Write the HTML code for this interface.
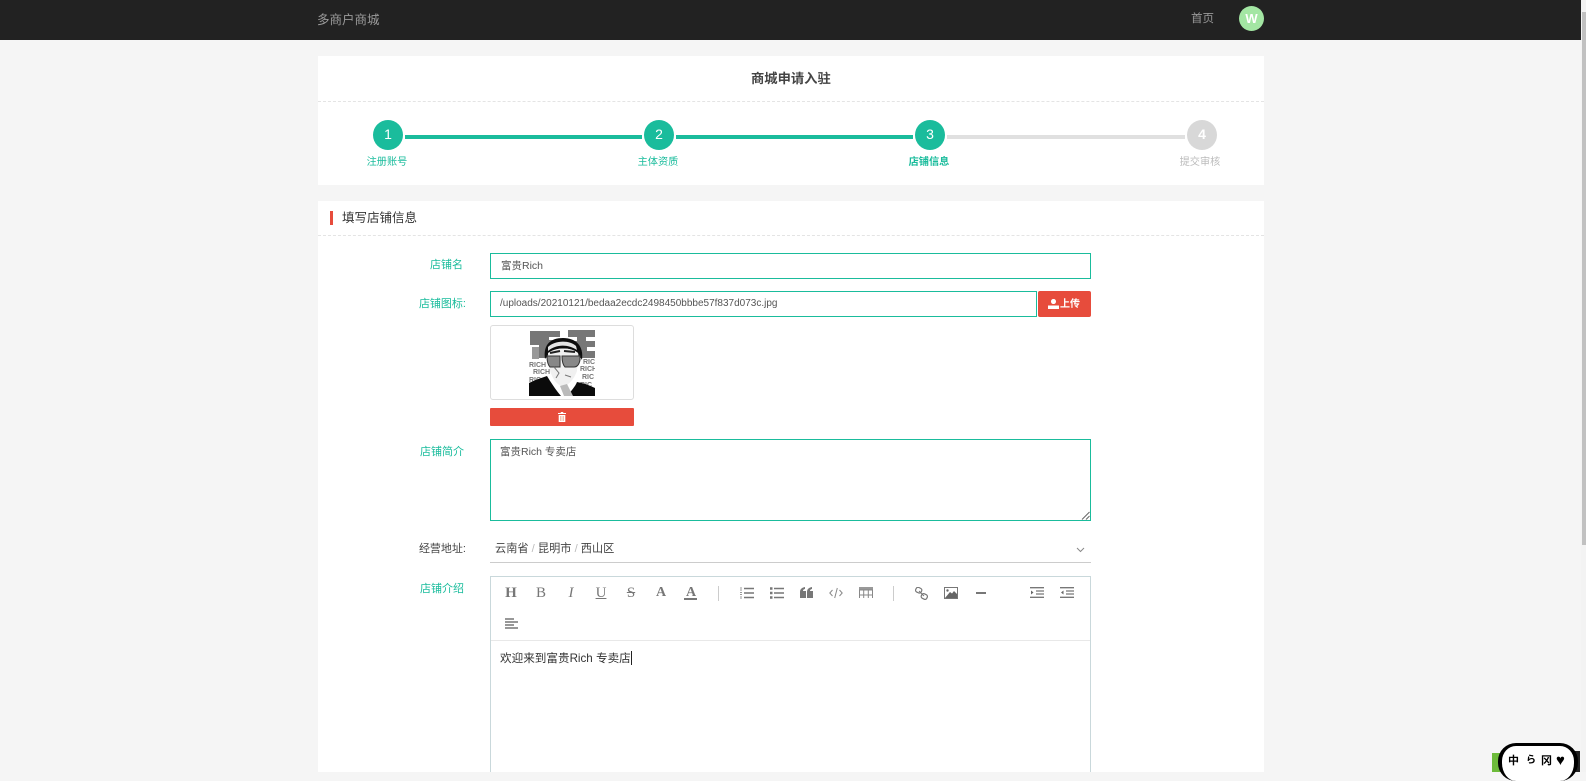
<!DOCTYPE html>
<html lang="zh-CN"><head><meta charset="utf-8"><title>商城申请入驻</title>
<style>
*{box-sizing:border-box}
html,body{margin:0;padding:0;width:1586px;height:772px;overflow:hidden;background:#f5f5f5;font-family:"Liberation Sans","Noto Sans CJK SC",sans-serif}
.a{position:absolute}
.t{position:absolute;white-space:nowrap;line-height:16px}
.panel{position:absolute;left:318px;width:946px;background:#fff}
.dash{position:absolute;left:318px;width:946px;border-top:1px dashed #e4e4e4;height:0}
.c{position:absolute;width:30px;height:30px;border-radius:50%;background:#1abc9c;color:#fff;font-size:14px;text-align:center;line-height:29px;top:120px}
.l{position:absolute;height:4px;top:135px;background:#1abc9c}
.sl{position:absolute;width:60px;text-align:center;font-size:10.2px;color:#1abc9c;top:155px;line-height:16px;height:12px;overflow:hidden;white-space:nowrap}
.lab{position:absolute;font-size:11px;color:#1abc9c;text-align:right;white-space:nowrap;line-height:16px}
.inp{position:absolute;border:1px solid #1abc9c;background:#fff;font-size:10.5px;color:#555;line-height:24px;padding-left:10px;white-space:nowrap}
svg{position:absolute;display:block}
.ti{font-family:"Liberation Serif",serif;position:absolute;color:#777;text-align:center;width:20px;line-height:18px;font-size:15px;top:584px}
</style></head><body>

<div class="a" style="left:0;top:0;width:1581px;height:40px;background:#222"></div>
<div class="t" style="left:317px;top:12px;font-size:12.5px;color:#9a9a9a">多商户商城</div>
<div class="t" style="left:1191px;top:11px;font-size:11.5px;color:#999">首页</div>
<div class="a" style="left:1239px;top:6px;width:25px;height:25px;border-radius:50%;background:#a3e6a3;color:#fff;font-weight:bold;font-size:13px;text-align:center;line-height:25px">W</div>

<div class="panel" style="top:56px;height:129px"></div>
<div class="dash" style="top:101px"></div>
<div class="t" style="left:751px;top:71px;font-size:13.3px;font-weight:bold;color:#444">商城申请入驻</div>

<div class="l" style="left:405px;width:237px"></div>
<div class="l" style="left:676px;width:237px"></div>
<div class="l" style="left:947px;width:238px;background:#e0e0e0"></div>
<div class="c" style="left:373px">1</div>
<div class="c" style="left:644px">2</div>
<div class="c" style="left:915px">3</div>
<div class="c" style="left:1187px;background:#d8d8d8;font-weight:bold">4</div>
<div class="sl" style="left:357px">注册账号</div>
<div class="sl" style="left:628px">主体资质</div>
<div class="sl" style="left:899px;font-weight:bold">店铺信息</div>
<div class="sl" style="left:1170px;color:#bbb">提交审核</div>

<div class="panel" style="top:201px;height:571px"></div>
<div class="dash" style="top:235px"></div>
<div class="a" style="left:330px;top:211px;width:3px;height:14px;background:#e74c3c"></div>
<div class="t" style="left:342px;top:210px;font-size:12.5px;color:#333">填写店铺信息</div>

<div class="lab" style="left:430px;top:257px;width:33px">店铺名</div>
<div class="inp" style="left:490px;top:253px;width:601px;height:26px">富贵Rich</div>

<div class="lab" style="left:410px;top:296px;width:56px">店铺图标:</div>
<div class="inp" style="left:490px;top:291px;width:547px;height:26px;padding-left:9px;font-size:10px">/uploads/20210121/bedaa2ecdc2498450bbbe57f837d073c.jpg</div>
<div class="a" style="left:1038px;top:291px;width:53px;height:26px;background:#e74c3c;border-radius:2px"></div>
<svg style="left:1048px;top:299px" width="11" height="10" viewBox="0 0 11 10"><path d="M5.500 0C7 0 8 1 8 2.500C8 4 7 5 5.500 5C4 5 3 4 3 2.500C3 1 4 0 5.500 0ZM0 6.500H11V10H0Z" fill="#fff"/></svg>
<div class="t" style="left:1060px;top:297px;font-size:10px;font-weight:bold;color:#fff">上传</div>

<div class="a" style="left:490px;top:325px;width:144px;height:75px;border:1px solid #ddd;border-radius:3px;background:#fff"></div>
<svg style="left:529px;top:329px" width="66" height="67" viewBox="0 0 66 67">
<rect width="66" height="67" fill="#fff"/>
<path d="M1 2H31V8H20V11H31V16H22V29H10V16H1ZM39 1H66V8H57V12H66V18H58V22H66V29H49V18H39V12H48V8H39Z" fill="#777"/>
<path d="M3 18H10V30H3Z" fill="#999"/>
<g fill="#777" font-size="7" font-weight="bold" font-family="Liberation Sans,sans-serif"><text x="0" y="38">RICH</text><text x="4" y="45">RICH</text><text x="0" y="53">RIC</text><text x="54" y="35">RIC</text><text x="51" y="42">RICH</text><text x="53" y="50">RIC</text><text x="51" y="58">RIC</text></g>
<path d="M16 30C14 15 22 9 34 9C47 9 55 17 53 31L49 24C42 18 27 18 20 24Z" fill="#0d0d0d"/>
<path d="M19 18C26 11 41 11 47 17L48 21C39 15 27 15 19 22Z" fill="#e4e4e4"/>
<path d="M19 24C27 18 42 18 49 24L48 42C45 50 39 58 32 57C24 53 19 42 19 24Z" fill="#f0f0f0"/>
<path d="M21 24L31 22M35 22L46 23" stroke="#222" stroke-width="2"/>
<path d="M18 27H31V38H21C19 36 18 32 18 27ZM33 27H51V31C50 36 48 38 45 38H36C34 36 33 32 33 27Z" fill="#888" stroke="#333" stroke-width="1"/>
<path d="M0 67V54C6 51 12 49 18 47C21 52 26 60 32 67ZM38 67C42 62 46 58 48 53C54 54 60 56 66 59V67Z" fill="#0b0b0b"/>
<path d="M31 57L38 55L44 67H35Z" fill="#bbb"/>
<path d="M25 38L30 44L27 49M36 46L42 48" stroke="#777" fill="none"/>
</svg>
<div class="a" style="left:490px;top:408px;width:144px;height:18px;background:#e74c3c;border-radius:1px"></div>
<svg style="left:558px;top:412px" width="8" height="10" viewBox="0 0 8 10"><path d="M3 0H5L5.500 1H8V2H0V1H2.500ZM.7 3H7.300V10H.7Z" fill="#fff"/><path d="M2.600 4V9M4 4V9M5.400 4V9" stroke="#e9967a" stroke-width=".6"/></svg>

<div class="lab" style="left:410px;top:444px;width:54px">店铺简介</div>
<div class="inp" style="left:490px;top:439px;width:601px;height:82px;line-height:16px;padding-top:4px;padding-left:9px">富贵Rich 专卖店</div>
<svg style="left:1081px;top:511px" width="9" height="9" viewBox="0 0 9 9"><path d="M8.500 1L1 8.500M8.500 5L5 8.500" stroke="#666" stroke-width="1"/></svg>

<div class="lab" style="left:410px;top:541px;width:56px;color:#444">经营地址:</div>
<div class="t" style="left:495px;top:541px;font-size:11.2px;color:#444">云南省 <span style="color:#bbb">/</span> 昆明市 <span style="color:#bbb">/</span> 西山区</div>
<div class="a" style="left:490px;top:562px;width:601px;height:1px;background:#ccc"></div>
<svg style="left:1076px;top:547px" width="9" height="6" viewBox="0 0 9 6"><path d="M1 1L4.500 4.500L8 1" fill="none" stroke="#888"/></svg>

<div class="lab" style="left:410px;top:581px;width:54px">店铺介绍</div>
<div class="a" style="left:490px;top:576px;width:601px;height:196px;border:1px solid #c9d8db;border-bottom:0;background:#fff"></div>
<div class="a" style="left:491px;top:640px;width:599px;height:1px;background:#e8e8e8"></div>
<div class="ti" style="left:501px;font-weight:bold">H</div>
<div class="ti" style="left:531px">B</div>
<div class="ti" style="left:561px;font-style:italic">I</div>
<div class="ti" style="left:591px;text-decoration:underline">U</div>
<div class="ti" style="left:621px;text-decoration:line-through">S</div>
<div class="ti" style="left:651px;font-size:14px;font-weight:bold">A</div>
<div class="ti" style="left:681px;font-size:14px;font-weight:bold">A</div>
<div class="a" style="left:684px;top:598px;width:13px;height:2px;background:#777"></div>
<div class="a" style="left:718px;top:586px;width:1px;height:15px;background:#ccc"></div>
<div class="a" style="left:893px;top:586px;width:1px;height:15px;background:#ccc"></div>

<svg style="left:740px;top:587px" width="14" height="12" viewBox="0 0 14 12"><path d="M4 1.500H14M4 6H14M4 10.500H14" stroke="#777" stroke-width="1.500"/><path d="M0 1H2M0 3H2M0 5.500H2M0 7.500H2M0 10H2M0 12H2" stroke="#999"/></svg>
<svg style="left:770px;top:587px" width="14" height="12" viewBox="0 0 14 12"><path d="M4 1.500H14M4 6H14M4 10.500H14" stroke="#777" stroke-width="1.500"/><path d="M0 1.500H2.500M0 6H2.500M0 10.500H2.500" stroke="#777" stroke-width="2.500"/></svg>
<svg style="left:800px;top:587px" width="13" height="11" viewBox="0 0 13 11"><path d="M0 5C0 2 2 .5 5 0V2C3.500 2.300 3 3 3 4H6V11H0ZM7 5C7 2 9 .5 12 0V2C10.500 2.300 10 3 10 4H13V11H7Z" fill="#777"/></svg>
<svg style="left:829px;top:587px" width="14" height="12" viewBox="0 0 14 12"><path d="M3.500 3L.8 6L3.500 9M10.500 3L13.200 6L10.500 9M8.300 1L5.700 11" fill="none" stroke="#888"/></svg>
<svg style="left:859px;top:587px" width="14" height="11" viewBox="0 0 14 11"><path d="M.5 11V.5H13.500V11M.5 3H13.500M.5 8H13.500M4.700 .5V11M9.300 .5V11" fill="none" stroke="#888"/><path d="M0 0H14V2.500H0Z" fill="#999"/></svg>
<svg style="left:915px;top:587px" width="13" height="13" viewBox="0 0 13 13"><rect x=".7" y=".7" width="6" height="5" rx="2" fill="none" stroke="#777" stroke-width="1.200" transform="rotate(25 3.700 3.200)"/><rect x="6.300" y="7" width="6" height="5" rx="2" fill="none" stroke="#777" stroke-width="1.200" transform="rotate(25 9.300 9.500)"/><path d="M4 4L9 9" stroke="#777"/></svg>
<svg style="left:944px;top:587px" width="14" height="12" viewBox="0 0 14 12"><path d="M.5.500H13.500V11.500H.5Z" fill="none" stroke="#777"/><path d="M1 11L6 5L8 6.500L10 4L13 7V11Z" fill="#666"/><circle cx="3.500" cy="3.500" r="1.200" fill="#666"/></svg>
<div class="a" style="left:976px;top:592px;width:10px;height:2px;background:#777"></div>
<svg style="left:1030px;top:587px" width="14" height="11" viewBox="0 0 14 11"><path d="M0 .7H14M6 4H14M6 7H14M0 10.300H14" stroke="#777" stroke-width="1.300"/><path d="M1 3.500L3.500 5.500L1 7.500Z" fill="#666"/></svg>
<svg style="left:1060px;top:587px" width="14" height="11" viewBox="0 0 14 11"><path d="M0 .7H14M6 4H14M6 7H14M0 10.300H14" stroke="#777" stroke-width="1.300"/><path d="M3.500 3.500L1 5.500L3.500 7.500Z" fill="#666"/></svg>
<svg style="left:505px;top:618px" width="13" height="11" viewBox="0 0 13 11"><path d="M0 1H9M0 4H13M0 7H9M0 10H13" stroke="#777" stroke-width="1.500"/></svg>

<div class="t" style="left:500px;top:651px;font-size:11.6px;color:#333">欢迎来到富贵Rich 专卖店</div>
<div class="a" style="left:631px;top:651px;width:1px;height:14px;background:#222"></div>

<div class="a" style="left:1581px;top:0;width:5px;height:772px;background:#f3f3f3"></div>
<div class="a" style="left:1582px;top:12px;width:4px;height:533px;background:#c1c1c1"></div>

<div class="a" style="left:1492px;top:753px;width:12px;height:19px;background:#6dbb3a"></div>
<div class="a" style="left:1572px;top:751px;width:8px;height:21px;background:#222"></div>
<div class="a" style="left:1498px;top:743px;width:80px;height:38px;background:#fff;border:4px solid #000;border-bottom:0;border-radius:18px;border-top-width:3px"></div>
<div class="t" style="left:1508px;top:753px;font-size:11px;font-weight:bold;color:#000">中</div>
<div class="t" style="left:1526px;top:753px;font-size:10px;font-weight:bold;color:#000">ら</div>
<div class="t" style="left:1541px;top:753px;font-size:11px;font-weight:bold;color:#000">冈</div>
<div class="t" style="left:1556px;top:753px;font-size:15px;color:#000">♥</div>
</body></html>
